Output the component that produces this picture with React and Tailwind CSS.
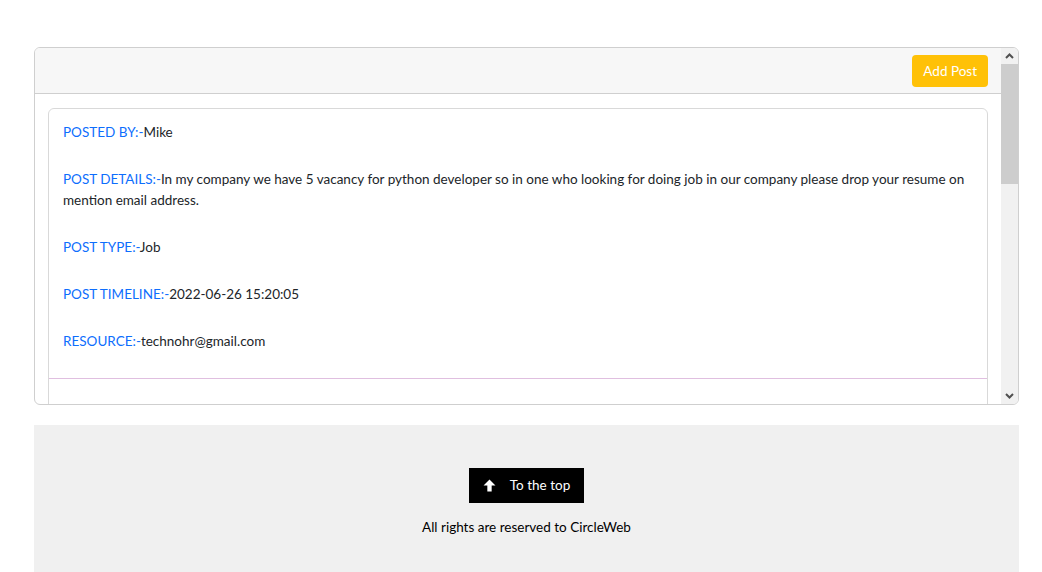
import React from "react";

const posts = [
  {
    by: "Mike",
    details:
      "In my company we have 5 vacancy for python developer so in one who looking for doing job in our company please drop your resume on mention email address.",
    type: "Job",
    time: "2022-06-26 15:20:05",
    resource: "technohr@gmail.com",
  },
  {
    by: "John",
    details: "We are organizing a meetup for web developers this weekend, everyone is welcome to join.",
    type: "Event",
    time: "2022-06-25 11:02:41",
    resource: "events@circleweb.com",
  },
];

function Row({ label, value }) {
  return (
    <p className="mb-[26px] leading-[21px]">
      <span className="text-[#0d6efd]">{label}:-</span>
      <span className="text-[#212529]">{value}</span>
    </p>
  );
}

function Post({ p }) {
  return (
    <div className="shrink-0 rounded-[6px] border border-[#d9d9d9] bg-white">
      <div className="px-[14px] pt-[13px]">
        <Row label="POSTED BY" value={p.by} />
        <Row label="POST DETAILS" value={p.details} />
        <Row label="POST TYPE" value={p.type} />
        <Row label="POST TIMELINE" value={p.time} />
        <Row label="RESOURCE" value={p.resource} />
      </div>
      <div className="h-[60px] border-t border-[#e0bfe0]"></div>
    </div>
  );
}

function ScrollBar() {
  return (
    <div className="flex w-[17px] shrink-0 flex-col bg-[#f1f1f1]">
      <div className="flex h-[16px] items-center justify-center">
        <svg width="9" height="6" viewBox="0 0 9 6">
          <path d="M1 5 L4.5 1.5 L8 5" fill="none" stroke="#505050" strokeWidth="2" />
        </svg>
      </div>
      <div className="h-[120px] bg-[#cdcdcd]"></div>
      <div className="flex-1"></div>
      <div className="flex h-[17px] items-center justify-center">
        <svg width="9" height="6" viewBox="0 0 9 6">
          <path d="M1 1 L4.5 4.5 L8 1" fill="none" stroke="#505050" strokeWidth="2" />
        </svg>
      </div>
    </div>
  );
}

export default function App() {
  return (
    <div
      className="min-h-[572px] bg-white text-[13.5px] text-[#212529]"
      style={{ fontFamily: "Lato, 'Open Sans', sans-serif" }}
    >
      <div className="ml-[34px] w-[985px] pt-[47px]">
        <div className="flex h-[358px] overflow-hidden rounded-[6px] border border-[#cfcfcf]">
          <div className="flex min-w-0 flex-1 flex-col overflow-hidden">
            <div className="flex h-[46px] shrink-0 items-center justify-end border-b border-[#cfcfcf] bg-[#f7f7f7] pr-[13px]">
              <button className="h-[32px] rounded-[4px] bg-[#ffc107] px-[11px] pt-[1px] text-[13.5px] text-white">
                Add Post
              </button>
            </div>
            <div className="flex flex-col gap-[14px] px-[13px] pb-[14px] pt-[14px]">
              {posts.map((p, i) => (
                <Post key={i} p={p} />
              ))}
            </div>
          </div>
          <ScrollBar />
        </div>

        <footer className="mt-[20px] flex h-[160px] flex-col items-center bg-[#f0f0f0] pt-[43px]">
          <button className="flex h-[35px] w-[115px] items-center justify-center gap-[14px] bg-black text-[13.5px] text-white">
            <svg width="13" height="13" viewBox="0 0 12 12">
              <path d="M6 0.5 L11.5 6 L8 6 L8 11.5 L4 11.5 L4 6 L0.5 6 Z" fill="white" />
            </svg>
            <span>To the top</span>
          </button>
          <p className="mt-[14px] leading-[21px] text-black">All rights are reserved to CircleWeb</p>
        </footer>
      </div>
    </div>
  );
}
